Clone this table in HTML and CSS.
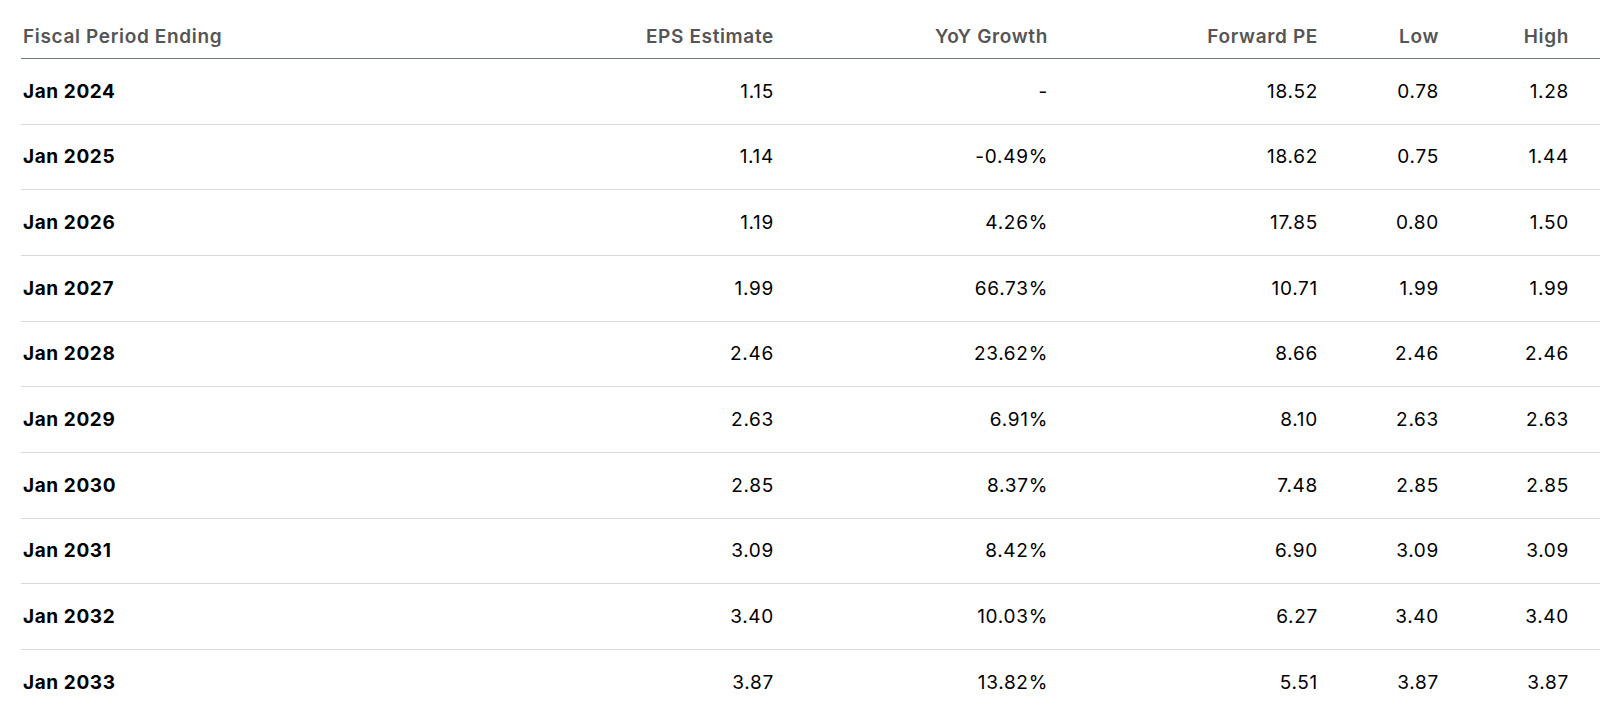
FILE: index.html
```html
<!DOCTYPE html>
<html>
<head>
<meta charset="utf-8">
<link rel="stylesheet" href="styles.css">
</head>
<body>
<div class="table">
  <div class="row head">
    <div class="cell first">Fiscal Period Ending</div>
    <div class="cell">EPS Estimate</div>
    <div class="cell">YoY Growth</div>
    <div class="cell">Forward PE</div>
    <div class="cell">Low</div>
    <div class="cell">High</div>
  </div>
  <div class="row"><div class="cell first">Jan 2024</div><div class="cell">1.15</div><div class="cell">-</div><div class="cell">18.52</div><div class="cell">0.78</div><div class="cell">1.28</div></div>
  <div class="row"><div class="cell first">Jan 2025</div><div class="cell">1.14</div><div class="cell">-0.49%</div><div class="cell">18.62</div><div class="cell">0.75</div><div class="cell">1.44</div></div>
  <div class="row"><div class="cell first">Jan 2026</div><div class="cell">1.19</div><div class="cell">4.26%</div><div class="cell">17.85</div><div class="cell">0.80</div><div class="cell">1.50</div></div>
  <div class="row"><div class="cell first">Jan 2027</div><div class="cell">1.99</div><div class="cell">66.73%</div><div class="cell">10.71</div><div class="cell">1.99</div><div class="cell">1.99</div></div>
  <div class="row"><div class="cell first">Jan 2028</div><div class="cell">2.46</div><div class="cell">23.62%</div><div class="cell">8.66</div><div class="cell">2.46</div><div class="cell">2.46</div></div>
  <div class="row"><div class="cell first">Jan 2029</div><div class="cell">2.63</div><div class="cell">6.91%</div><div class="cell">8.10</div><div class="cell">2.63</div><div class="cell">2.63</div></div>
  <div class="row"><div class="cell first">Jan 2030</div><div class="cell">2.85</div><div class="cell">8.37%</div><div class="cell">7.48</div><div class="cell">2.85</div><div class="cell">2.85</div></div>
  <div class="row"><div class="cell first">Jan 2031</div><div class="cell">3.09</div><div class="cell">8.42%</div><div class="cell">6.90</div><div class="cell">3.09</div><div class="cell">3.09</div></div>
  <div class="row"><div class="cell first">Jan 2032</div><div class="cell">3.40</div><div class="cell">10.03%</div><div class="cell">6.27</div><div class="cell">3.40</div><div class="cell">3.40</div></div>
  <div class="row last"><div class="cell first">Jan 2033</div><div class="cell">3.87</div><div class="cell">13.82%</div><div class="cell">5.51</div><div class="cell">3.87</div><div class="cell">3.87</div></div>
</div>
</body>
</html>
```
FILE: styles.css
```css
html, body {
  margin: 0;
  padding: 0;
  background: #fff;
}
body {
  font-family: Inter, "Liberation Sans", sans-serif;
  color: #000;
  overflow: hidden;
}
.table {
  margin-left: 21px;
  display: flex;
  flex-direction: column;
}
.row {
  display: grid;
  grid-template-columns: 1fr 274px 274px 270px 121px 130px;
  padding-right: 31px;
  align-items: center;
  height: 65.66px;
  box-sizing: border-box;
  border-bottom: 1px solid #d9d9d9;
  font-size: 19px;
  letter-spacing: 0.7px;
}
.row.head {
  height: 59px;
  border-bottom: 1.5px solid #6f7b80;
  color: #555;
  font-weight: 600;
  padding-top: 14px;
  letter-spacing: 0.65px;
}
.row.last {
  border-bottom: none;
}
.cell {
  text-align: right;
}
.cell.first {
  text-align: left;
  padding-left: 2px;
}
.row:not(.head) .cell.first {
  font-weight: 700;
  letter-spacing: 0.6px;
}
```
